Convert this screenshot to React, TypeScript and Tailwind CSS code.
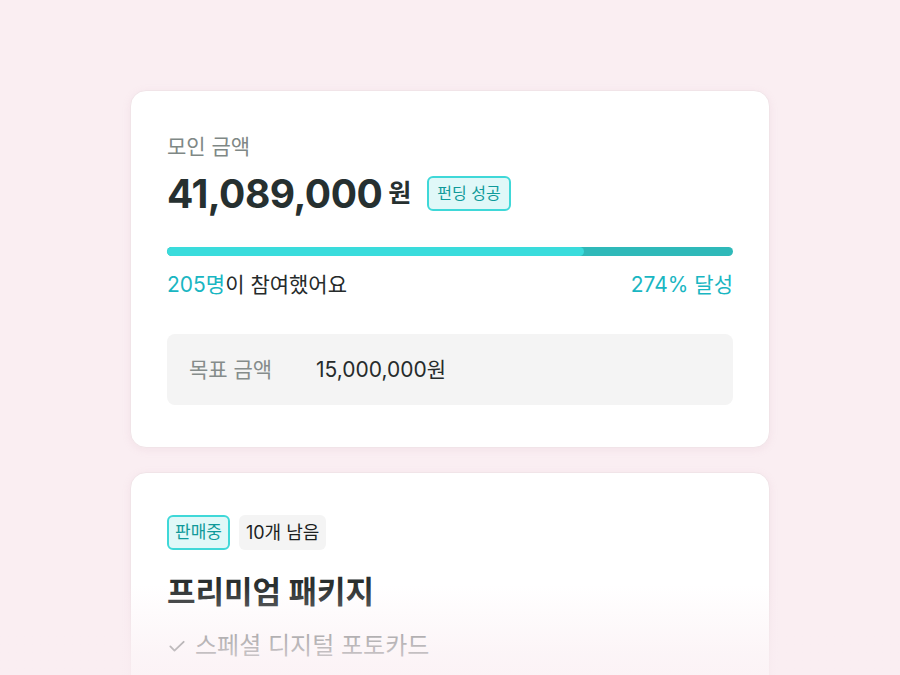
import React from 'react';

const App: React.FC = () => {
  const raised = 41089000;
  const goal = 15000000;
  const fill = 73.7;

  return (
    <div className="min-h-screen w-full bg-[#faeef2] font-['Inter','Noto_Sans_CJK_KR',sans-serif] relative overflow-hidden">
      <div className="w-[640px] mx-auto pt-[90px] flex flex-col gap-[24px]">
        {/* Funding summary */}
        <div className="bg-white rounded-2xl border border-[#f1e4e8] shadow-[0_2px_8px_rgba(200,150,170,0.12)] px-9 pt-[40px] pb-[42px]">
          <p className="text-[21px] leading-[32px] text-[#7f8886]">모인 금액</p>
          <div className="flex items-center mt-[7px] h-[46px]">
            <span className="text-[39px] font-bold tracking-[-0.5px] text-[#263030] leading-none">41,089,000</span>
            <span className="text-[25px] font-bold text-[#263030] ml-[6px] leading-none">원</span>
            <span className="ml-[16px] h-[35px] px-[8px] flex items-center rounded-[6px] border-2 border-[#3fd8d8] bg-[#e0f8f8] text-[#0f9a9a] text-[16px]">
              펀딩 성공
            </span>
          </div>
          <div className="mt-[31px] h-[9px] rounded-full bg-[#2fb9b9] overflow-hidden">
            <div className="h-full rounded-full bg-[#3adcdc]" style={{ width: `${fill}%` }} />
          </div>
          <div className="flex justify-between items-center mt-[14px] text-[21px] leading-[30px]">
            <p className="text-[#262b2b]">
              <span className="text-[#19b6c2]">205명</span>이 참여했어요
            </p>
            <p className="text-[#19b6c2]">{Math.round((raised / goal) * 100)}% 달성</p>
          </div>
          <div className="mt-[34px] h-[71px] rounded-lg bg-[#f4f4f4] flex items-center px-[22px] text-[21px]">
            <span className="text-[#858c8b] w-[127px]">목표 금액</span>
            <span className="text-[#262b2b]">15,000,000원</span>
          </div>
        </div>

        {/* Reward package */}
        <div className="bg-white rounded-2xl border border-[#f1e4e8] shadow-[0_2px_8px_rgba(200,150,170,0.12)] px-9 pt-[42px] pb-[60px]">
          <div className="flex gap-[9px]">
            <span className="h-[35px] px-[6px] flex items-center rounded-[6px] border-2 border-[#3fd8d8] bg-[#e0f8f8] text-[#0f9a9a] text-[17px]">
              판매중
            </span>
            <span className="h-[35px] px-[7px] flex items-center rounded-[6px] bg-[#f4f4f4] text-[#1c1f1f] text-[18px]">
              10개 남음
            </span>
          </div>
          <h2 className="mt-[22px] text-[31px] font-bold text-[#2a2f2f] leading-[40px]">프리미엄 패키지</h2>
          <div className="mt-[16px] flex items-center gap-[8px] text-[24px] text-[#7a7f7f]">
            <svg width="20" height="20" viewBox="0 0 24 24" fill="none" stroke="currentColor" strokeWidth="2.2" strokeLinecap="round" strokeLinejoin="round">
              <path d="M4 12.5l5 5L20 7" />
            </svg>
            <span>스페셜 디지털 포토카드</span>
          </div>
        </div>
      </div>
      {/* fade out over the bottom */}
      <div className="absolute left-0 right-0 bottom-0 h-[140px] bg-gradient-to-b from-[#faeef2]/0 via-[#faeef2]/60 to-[#faeef2]/95 pointer-events-none" />
    </div>
  );
};

export default App;
